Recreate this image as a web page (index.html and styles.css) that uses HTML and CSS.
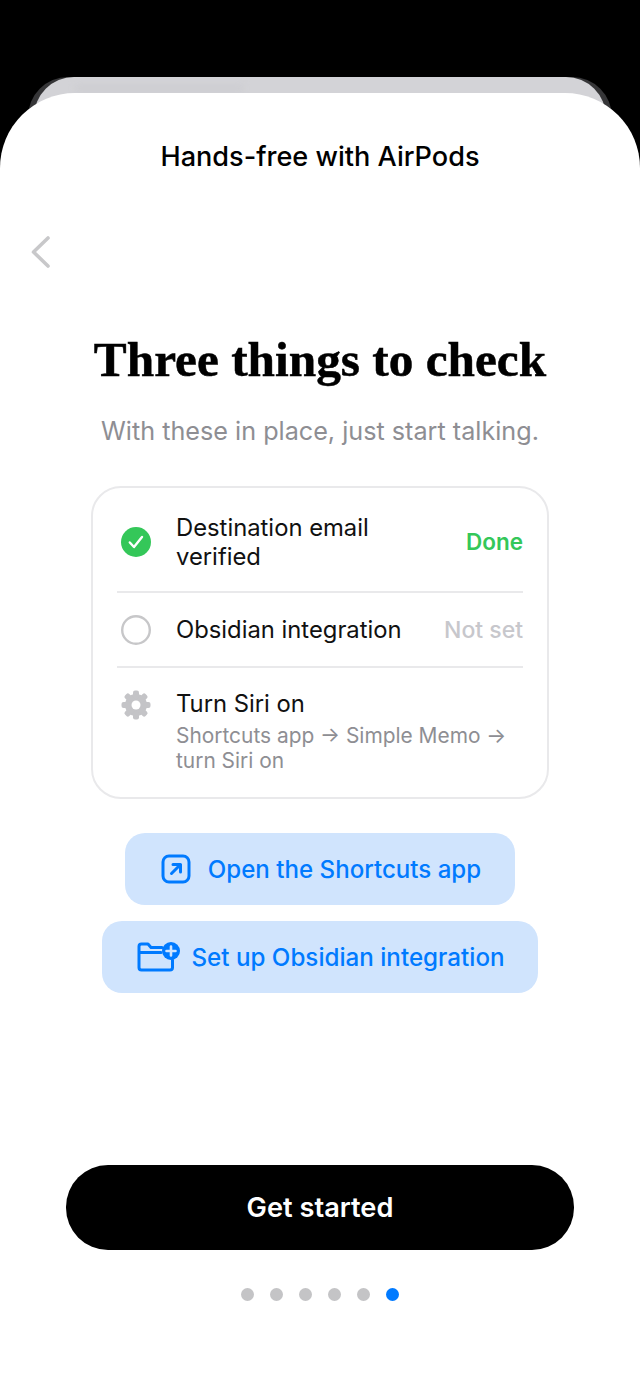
FILE: index.html
```html
<!DOCTYPE html>
<html lang="en">
<head>
<meta charset="utf-8">
<title>Hands-free with AirPods</title>
<link rel="stylesheet" href="styles.css">
</head>
<body>
<div class="stack-back"><div class="stack-mid"><div class="stack-blur"></div></div></div>
<main class="sheet">
  <h2 class="nav-title">Hands-free with AirPods</h2>
  <div class="back-row">
    <svg class="back-icon" width="24" height="34" viewBox="0 0 24 34"><path d="M19 3 L4.500 17 L19 31" fill="none" stroke="#c8c8ca" stroke-width="3.600" stroke-linecap="round" stroke-linejoin="round"/></svg>
  </div>
  <h1 class="headline">Three things to check</h1>
  <p class="subtitle">With these in place, just start talking.</p>
  <section class="card">
    <div class="row row-first">
      <svg class="row-icon" width="30" height="30" viewBox="0 0 30 30"><circle cx="15" cy="15" r="15" fill="#34c759"/><path d="M8.800 15.500 L13 20 L21 10" fill="none" stroke="#fff" stroke-width="2.400" stroke-linecap="round" stroke-linejoin="round"/></svg>
      <div class="row-text">Destination email verified</div>
      <div class="status status-done">Done</div>
    </div>
    <div class="row row-second">
      <svg class="row-icon" width="30" height="30" viewBox="0 0 30 30"><circle cx="15" cy="15" r="13.800" fill="none" stroke="#c7c7c9" stroke-width="2.400"/></svg>
      <div class="row-text">Obsidian integration</div>
      <div class="status status-off">Not set</div>
    </div>
    <div class="row row-third">
      <svg class="row-icon gear" width="30" height="30" viewBox="0 0 30 30"><g fill="#c4c4c7"><circle cx="15" cy="15" r="11"/><rect x="12" y="0.500" width="6" height="29" rx="2"/><rect x="12" y="0.500" width="6" height="29" rx="2" transform="rotate(45 15 15)"/><rect x="12" y="0.500" width="6" height="29" rx="2" transform="rotate(90 15 15)"/><rect x="12" y="0.500" width="6" height="29" rx="2" transform="rotate(135 15 15)"/></g><circle cx="15" cy="15" r="4.500" fill="#fff"/></svg>
      <div class="row-body">
        <div class="row-text">Turn Siri on</div>
        <div class="row-sub">Shortcuts app → Simple Memo → turn Siri on</div>
      </div>
    </div>
  </section>
  <button class="action action-shortcuts">
    <svg width="30" height="30" viewBox="0 0 30 30"><rect x="2" y="2" width="26" height="26" rx="6" fill="none" stroke="#007aff" stroke-width="3"/><path d="M10.500 19.500 L19.500 10.500 M12 10.500 H19.500 V18" fill="none" stroke="#007aff" stroke-width="3" stroke-linecap="round" stroke-linejoin="round"/></svg>
    <span>Open the Shortcuts app</span>
  </button>
  <button class="action action-obsidian">
    <svg width="44" height="30" viewBox="0 0 44 30"><path d="M2 9 V25.500 Q2 28 4.500 28 H33 Q35.500 28 35.500 25.500 V18 M2 9 V4.500 Q2 2 4.500 2 H11 L14 5.500 H25 M2 10.500 H24" fill="none" stroke="#007aff" stroke-width="3" stroke-linecap="round" stroke-linejoin="round"/><circle cx="34" cy="9" r="9" fill="#007aff"/><path d="M34 4.500 V13.500 M29.500 9 H38.500" stroke="#d0e4fd" stroke-width="2.600" stroke-linecap="round"/></svg>
    <span>Set up Obsidian integration</span>
  </button>
  <div class="spacer"></div>
  <button class="primary">Get started</button>
  <div class="dots">
    <span class="dot"></span><span class="dot"></span><span class="dot"></span><span class="dot"></span><span class="dot"></span><span class="dot dot-on"></span>
  </div>
</main>
</body>
</html>
```

FILE: styles.css
```css
* { box-sizing: border-box; }
html, body { margin: 0; padding: 0; }
body {
  width: 640px;
  height: 1385px;
  overflow: hidden;
  background: #000;
  position: relative;
  font-family: Inter, "Liberation Sans", sans-serif;
  padding-top: 93px;
}
.stack-back {
  position: absolute;
  left: 28px;
  top: 77px;
  width: 584px;
  height: 60px;
  background: #363638;
  border-radius: 40px 40px 0 0;
  display: flex;
  justify-content: center;
}
.stack-mid {
  width: 572px;
  height: 60px;
  background: #d3d3d7;
  border-radius: 40px 40px 0 0;
  padding: 8px 0 0 41px;
}
.stack-blur {
  width: 168px;
  height: 7px;
  background: #cdcdd1;
  filter: blur(3px);
}
.sheet {
  position: relative;
  width: 640px;
  height: 1292px;
  background: #fff;
  display: flex;
  flex-direction: column;
  align-items: center;
  border-radius: 75px 75px 0 0;
}
.nav-title {
  margin: 46px 0 0;
  font-size: 27.100px;
  line-height: 36px;
  font-weight: 500;
  color: #000;
}
.back-row {
  align-self: stretch;
  padding: 60px 0 0 29px;
  height: 103px;
}
.back-icon { display: block; }
.headline {
  margin: 52px 0 0;
  font-family: "Liberation Serif", serif;
  font-size: 49.300px;
  line-height: 60px;
  font-weight: 700;
  color: #000;
  white-space: nowrap;
  -webkit-text-stroke: 0.5px #000;
}
.subtitle {
  margin: 25px 0 0;
  font-size: 25.200px;
  line-height: 32px;
  color: #8e8e93;
}
.card {
  margin-top: 39px;
  width: 458px;
  height: 313px;
  border: 2px solid #e9e9eb;
  border-radius: 30px;
  padding: 0 24px;
  display: flex;
  flex-direction: column;
}
.row {
  display: flex;
  align-items: center;
  gap: 25px;
  border-bottom: 2px solid #e9e9eb;
}
.row-first { height: 105px; padding-top: 4px; }
.row-second { height: 75px; }
.row-third { flex: 1; border-bottom: 0; align-items: flex-start; padding-top: 21px; }
.row-icon { flex: none; margin-left: 4px; }
.gear { margin-top: 1px; }
.row-text {
  flex: 1;
  font-size: 23.800px;
  line-height: 29px;
  color: #111;
}
.row-first .row-text { padding-right: 50px; }
.status { font-size: 22.500px; font-weight: 600; flex: none; }
.status-done { color: #34c759; }
.status-off { color: #c7c7cc; font-size: 23px; font-weight: 500; }
.row-body { flex: 1; }
.row-sub {
  margin-top: 5px;
  font-size: 20.900px;
  line-height: 25px;
  color: #8e8e93;
}
.action {
  font-family: inherit;
  border: 0;
  background: #d0e4fd;
  color: #007aff;
  font-size: 24.100px;
  font-weight: 500;
  height: 72px;
  border-radius: 20px;
  display: flex;
  align-items: center;
  justify-content: center;
  padding: 0;
}
.action-shortcuts { margin-top: 34px; width: 390px; gap: 17px; padding-left: 2px; }
.action-obsidian { margin-top: 16px; width: 436px; gap: 10px; font-size: 24.200px; padding-left: 2px; }
.spacer { flex: 1; }
.primary {
  font-family: inherit;
  border: 0;
  width: 508px;
  height: 85px;
  border-radius: 42px;
  background: #000;
  color: #fff;
  font-size: 27.200px;
  font-weight: 600;
}
.dots {
  margin: 38px 0 84px;
  display: flex;
  gap: 16px;
  height: 13px;
}
.dot {
  width: 13px;
  height: 13px;
  border-radius: 50%;
  background: #c4c4c6;
}
.dot-on { background: #007aff; }
```
